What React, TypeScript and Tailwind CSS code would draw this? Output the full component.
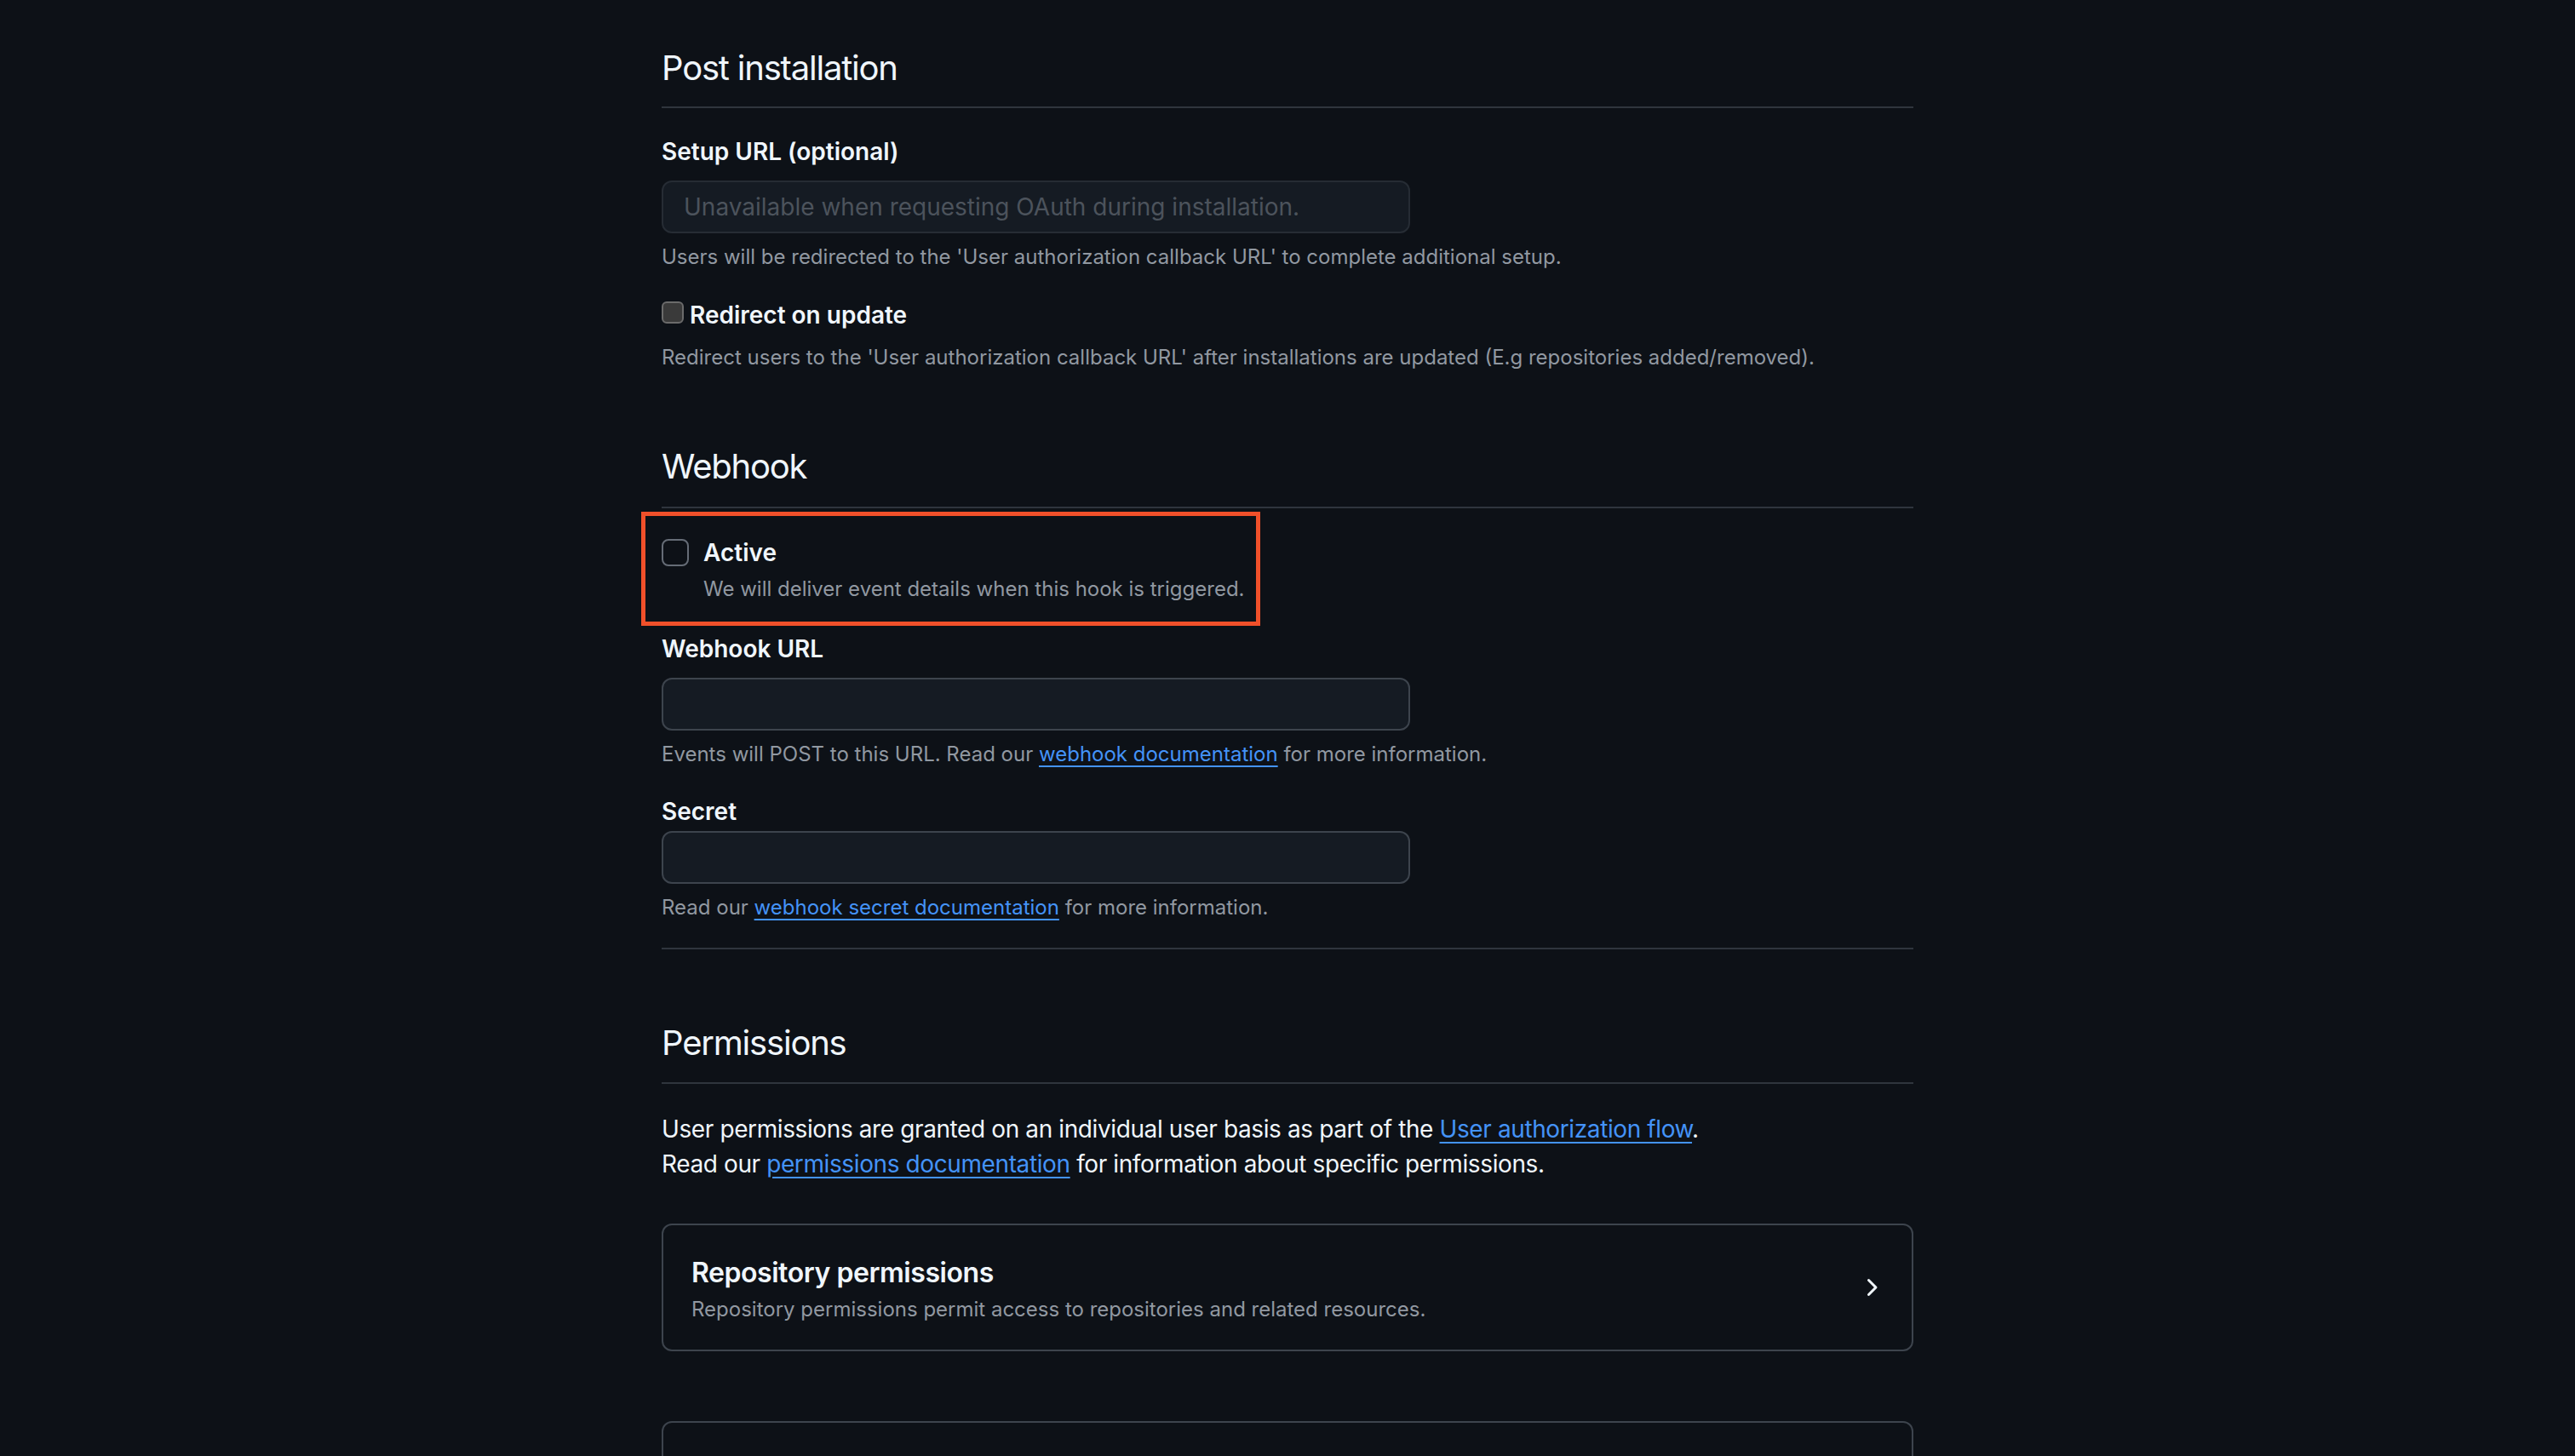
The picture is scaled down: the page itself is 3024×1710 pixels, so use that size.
import { ChangeEvent, useState } from "react";

function ChevronRight() {
  return (
    <svg width="32" height="32" viewBox="0 0 16 16" fill="#f0f6fc" aria-hidden="true">
      <path d="M6.22 3.22a.75.75 0 0 1 1.06 0l4.25 4.25a.75.75 0 0 1 0 1.06l-4.25 4.25a.751.751 0 0 1-1.042-.018.751.751 0 0 1-.018-1.042L9.94 8 6.22 4.28a.75.75 0 0 1 0-1.06Z" />
    </svg>
  );
}

export default function App() {
  const [form, setForm] = useState({ webhookUrl: "", secret: "" });
  const [redirectOnUpdate, setRedirectOnUpdate] = useState(false);
  const [active, setActive] = useState(false);

  const update = (key: "webhookUrl" | "secret") => (e: ChangeEvent<HTMLInputElement>) =>
    setForm({ ...form, [key]: e.target.value });

  return (
    <div className="h-[1710px] overflow-hidden bg-[#0d1117] font-['Inter',sans-serif] text-[#f0f6fc]">
      <div className="mx-auto w-[1470px] pt-[50px]">
        {/* Post installation */}
        <h2 className="border-b-2 border-[#2f353d] pb-[15px] text-[40px] leading-[60px] font-normal tracking-[-0.03em]">
          Post installation
        </h2>
        <label className="mt-[31px] block text-[28px] leading-[40px] font-semibold">
          Setup URL (optional)
        </label>
        <input
          disabled
          placeholder="Unavailable when requesting OAuth during installation."
          className="mt-[14px] block h-[62px] w-[879px] rounded-[12px] border-2 border-[#262c34] bg-[#151b23] px-[24px] text-[28px] outline-none placeholder:text-[#4c535c]"
        />
        <p className="mt-[10px] text-[24px] leading-[36px] text-[#9198a1]">
          Users will be redirected to the 'User authorization callback URL' to complete additional setup.
        </p>
        <label className="mt-[28px] flex h-[40px] items-center gap-[7px] text-[28px] font-semibold">
          <input
            type="checkbox"
            checked={redirectOnUpdate}
            onChange={(e) => setRedirectOnUpdate(e.target.checked)}
            className="m-0 -mt-[3px] h-[26px] w-[26px] appearance-none rounded-[6px] border-2 border-[#6b6b6b] bg-[#3a3a3a]"
          />
          <span className="mt-[3px]">Redirect on update</span>
        </label>
        <p className="mt-[14px] text-[24px] leading-[36px] text-[#9198a1]">
          Redirect users to the 'User authorization callback URL' after installations are updated (E.g repositories added/removed).
        </p>

        {/* Webhook */}
        <h2 className="mt-[80px] border-b-2 border-[#2f353d] pb-[17px] text-[40px] leading-[60px] font-normal tracking-[-0.03em]">
          Webhook
        </h2>
        <div className="-ml-[24px] mt-[4px] w-[727px] border-[5px] border-[#f0502a] pb-[20px] pl-[19px] pt-[23px]">
          <label className="flex gap-[17px]">
            <input
              type="checkbox"
              checked={active}
              onChange={(e) => setActive(e.target.checked)}
              className="m-0 mt-[4px] h-[32px] w-[32px] shrink-0 appearance-none rounded-[8px] border-2 border-[#656c76] bg-transparent"
            />
            <span className="flex flex-col">
              <span className="text-[28px] leading-[40px] font-semibold">Active</span>
              <span className="mt-[5px] text-[24px] leading-[36px] text-[#9198a1]">
                We will deliver event details when this hook is triggered.
              </span>
            </span>
          </label>
        </div>
        <label className="mt-[7px] block text-[28px] leading-[40px] font-semibold">Webhook URL</label>
        <input
          value={form.webhookUrl}
          onChange={update("webhookUrl")}
          className="mt-[14px] block h-[62px] w-[879px] rounded-[12px] border-2 border-[#3d444d] bg-[#151b23] px-[24px] text-[28px] text-[#f0f6fc] outline-none"
        />
        <p className="mt-[10px] text-[24px] leading-[36px] text-[#9198a1]">
          Events will POST to this URL. Read our{" "}
          <a href="#" className="text-[#4493f8] underline decoration-2 underline-offset-[5px]">
            webhook documentation
          </a>{" "}
          for more information.
        </p>
        <label className="mt-[29px] block text-[28px] leading-[40px] font-semibold">Secret</label>
        <input
          value={form.secret}
          onChange={update("secret")}
          className="mt-[3px] block h-[62px] w-[879px] rounded-[12px] border-2 border-[#3d444d] bg-[#151b23] px-[24px] text-[28px] text-[#f0f6fc] outline-none"
        />
        <p className="mt-[10px] text-[24px] leading-[36px] text-[#9198a1]">
          Read our{" "}
          <a href="#" className="text-[#4493f8] underline decoration-2 underline-offset-[5px]">
            webhook secret documentation
          </a>{" "}
          for more information.
        </p>
        <div className="mt-[29px] h-[2px] bg-[#2f353d]" />

        {/* Permissions */}
        <h2 className="mt-[80px] border-b-2 border-[#2f353d] pb-[16px] text-[40px] leading-[60px] font-normal tracking-[-0.03em]">
          Permissions
        </h2>
        <p className="mt-[33px] text-[28px] leading-[41px] tracking-[-0.014em]">
          User permissions are granted on an individual user basis as part of the{" "}
          <a href="#" className="text-[#4493f8] underline decoration-2 underline-offset-[5px]">
            User authorization flow
          </a>
          .
          <br />
          Read our{" "}
          <a href="#" className="text-[#4493f8] underline decoration-2 underline-offset-[5px]">
            permissions documentation
          </a>{" "}
          for information about specific permissions.
        </p>

        <button className="mt-[49px] flex h-[150px] w-full items-center justify-between rounded-[12px] border-2 border-[#3d444d] pl-[33px] pr-[32px] text-left">
          <span className="flex flex-col pt-[7px]">
            <span className="text-[32px] leading-[40px] font-semibold tracking-[-0.014em]">Repository permissions</span>
            <span className="mt-[5px] text-[24px] leading-[36px] text-[#9198a1]">
              Repository permissions permit access to repositories and related resources.
            </span>
          </span>
          <ChevronRight />
        </button>

        <div className="mt-[82px] h-[150px] rounded-[12px] border-2 border-[#3d444d]" />
      </div>
    </div>
  );
}
